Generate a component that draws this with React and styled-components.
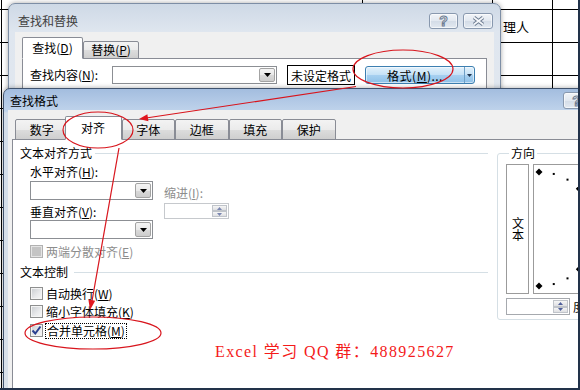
import styled, { createGlobalStyle } from "styled-components"

const GlobalStyle = createGlobalStyle`
  html, body {
    margin: 0;
    padding: 0;
  }
  body {
    width: 580px;
    height: 390px;
    overflow: hidden;
    background: #fff;
    font-family: "Noto Sans CJK SC", "Liberation Sans", sans-serif;
    font-size: 12px;
    color: #000;
  }
  * {
    box-sizing: border-box;
  }
`

const Desktop = styled.div`
  position: relative;
  width: 580px;
  height: 390px;
  overflow: hidden;
  border-right: 2px solid #22324a;
  border-bottom: 2px solid #22324a;
`

// spreadsheet behind the dialogs
const Sheet = styled.div`
  height: 100%;
  display: grid;
  grid-template-columns: 492px 61px 1fr;
  grid-template-rows: 10px 33px 1fr;
  background-color: #fff;
  background-image:
    linear-gradient(#000, #000),
    linear-gradient(#000, #000),
    linear-gradient(#000, #000),
    linear-gradient(#000, #000),
    linear-gradient(to bottom, transparent 32px, #000 32px);
  background-size: 1px 100%, 1px 100%, 1px 100%, 1px 100%, 100% 33px;
  background-position: 1px 0, 552px 0, 362px 0, 492px 0, 0 -23px;
  background-repeat: no-repeat, no-repeat, no-repeat, no-repeat, repeat;
`

const SheetCell = styled.div`
  grid-column: 2;
  grid-row: 2;
  align-self: center;
  padding-left: 11px;
  font-size: 13px;
`

const Window = styled.div`
  position: absolute;
  left: ${p => p.$x}px;
  top: ${p => p.$y}px;
  width: ${p => p.$w}px;
  height: ${p => p.$h}px;
  padding: 0 ${p => p.$frame}px;
  border: 1px solid ${p => (p.$active ? "#40536e" : "#7d8ea5")};
  border-radius: 7px 7px 0 0;
  background: ${p =>
    p.$active
      ? "linear-gradient(#a3bddf, #bfd3eb 22px, #d3dde9 24px, #d9e0e8)"
      : "linear-gradient(#ced9e6, #dfe6ef 28px, #e2e8ef)"};
  box-shadow: 0 0 5px rgba(0, 0, 0, 0.35);
  display: flex;
  flex-direction: column;
`

const TitleBar = styled.div`
  flex-shrink: 0;
  display: flex;
  align-items: center;
  height: ${p => p.$h}px;
  padding: ${p => p.$pad};
`

const Title = styled.span`
  flex: 1;
  font-size: 12px;
  line-height: 12px;
  color: ${p => (p.$active ? "#000" : "#404040")};
`

const CaptionButtons = styled.div`
  display: flex;
  gap: 5px;
`

const CaptionButton = styled.div`
  width: ${p => p.$w}px;
  height: ${p => p.$h}px;
  border: 1px solid #8898ae;
  border-radius: 3px;
  background: linear-gradient(#f1f4f8, #e2e8f0 50%, #d3dce7 51%, #e3e9f1);
  box-shadow: inset 0 0 0 1px rgba(255, 255, 255, 0.6);
  display: flex;
  align-items: center;
  justify-content: center;
  font-family: "Liberation Sans", sans-serif;
  font-weight: bold;
  font-size: 14px;
  color: #f6f8fb;
  -webkit-text-stroke: 1px #6d7c91;
`

const Client = styled.div`
  flex: 1;
  min-height: 0;
  display: flex;
  flex-direction: column;
  background: #f0f0f0;
  padding: ${p => p.$pad};
`

const TabStrip = styled.div`
  position: relative;
  z-index: 1;
  flex-shrink: 0;
  display: flex;
  align-items: flex-end;
  height: ${p => p.$h}px;
  padding-left: ${p => p.$indent}px;
  margin-bottom: -1px;
`

const Tab = styled.div`
  flex-shrink: 0;
  width: ${p => p.$w}px;
  height: ${p => p.$h}px;
  margin-left: ${p => p.$ml || 0}px;
  border: 1px solid #898c95;
  border-bottom-color: ${p => (p.$active ? "transparent" : "#898c95")};
  border-radius: 2px 2px 0 0;
  background: ${p =>
    p.$active
      ? "#fff"
      : "linear-gradient(#f3f3f3, #ebebeb 50%, #dddddd 51%, #cfcfcf)"};
  display: flex;
  align-items: center;
  justify-content: center;
  font-size: 12px;
  line-height: 12px;
  white-space: nowrap;
`

const TabPanel = styled.div`
  flex: 1;
  min-height: 0;
  display: flex;
  background: #fff;
  border: 1px solid #898c95;
  padding: ${p => p.$pad};
`

const Row = styled.div`
  display: flex;
  align-items: center;
  height: ${p => p.$h}px;
`

const Label = styled.span`
  flex-shrink: 0;
  width: ${p => (p.$w ? `${p.$w}px` : "auto")};
  margin-top: ${p => p.$mt || 0}px;
  font-size: 12px;
  line-height: 12px;
  color: ${p => (p.$disabled ? "#8d8d8d" : "#000")};
  white-space: nowrap;
  u {
    text-decoration: underline;
  }
`

const Combo = styled.div`
  flex-shrink: 0;
  display: flex;
  justify-content: flex-end;
  width: ${p => p.$w}px;
  height: ${p => p.$h}px;
  margin-top: ${p => p.$mt || 0}px;
  padding: 1px;
  background: #fff;
  border: 1px solid #8c8f94;
`

const DropButton = styled.div`
  width: 16px;
  display: flex;
  align-items: center;
  justify-content: center;
  border: 1px solid #a3a3a3;
  border-radius: 2px;
  background: linear-gradient(#f4f4f4, #e9e9e9 50%, #dadada 51%, #cdcdcd);
`

const FormatState = styled.div`
  margin-left: 10px;
  height: 20px;
  padding: 0 3px;
  display: flex;
  align-items: center;
  border: 1px solid #000;
  background: #fff;
  font-size: 12px;
`

const SplitButton = styled.div`
  margin-left: 10px;
  width: 110px;
  height: 18px;
  display: flex;
  border: 1px solid #3c7fb1;
  border-radius: 3px;
  background: linear-gradient(#e3f1fb, #c4e1f6 50%, #a7d0f0 51%, #8dc0e8);
  box-shadow: inset 0 0 0 1px rgba(255, 255, 255, 0.55);
`

const SplitMain = styled.div`
  flex: 1;
  display: flex;
  align-items: center;
  justify-content: center;
  font-size: 12px;
  letter-spacing: 0.5px;
`

const SplitArrow = styled.div`
  width: 10px;
  display: flex;
  align-items: center;
  justify-content: center;
  border-left: 1px solid #6e9fc6;
`

const LeftColumn = styled.div`
  flex-shrink: 0;
  width: 477px;
  padding-left: 7px;
  display: flex;
  flex-direction: column;
`

const SectionHead = styled.div`
  display: flex;
  align-items: center;
  height: 12px;
  margin-top: ${p => p.$mt}px;
  padding-right: 2px;
  font-size: 12px;
  line-height: 12px;

  &::after {
    content: "";
    flex: 1;
    margin-left: ${p => p.$gap}px;
    border-top: 1px solid #d5dfe5;
  }
`

const AlignBlock = styled.div`
  display: flex;
  gap: 11px;
  margin-top: 7px;
  padding-left: 10px;
`

const Stack = styled.div`
  display: flex;
  flex-direction: column;
  padding-top: ${p => p.$pt || 0}px;
`

const Spin = styled.div`
  flex-shrink: 0;
  display: flex;
  justify-content: flex-end;
  width: ${p => p.$w}px;
  height: ${p => p.$h}px;
  margin-top: ${p => p.$mt || 0}px;
  padding: 1px;
  background: #fff;
  border: 1px solid ${p => (p.$disabled ? "#c6c9cd" : "#a6a9ae")};
`

const SpinButtons = styled.div`
  width: 15px;
  display: flex;
  flex-direction: column;
`

const SpinButton = styled.div`
  flex: 1;
  display: flex;
  align-items: center;
  justify-content: center;
  border: 1px solid #c0c4ca;
  background: linear-gradient(#f6f6f6, #dedfe2);
`

const CheckList = styled.div`
  display: flex;
  flex-direction: column;
  gap: 5px;
  margin-top: ${p => p.$mt}px;
  padding-left: 10px;
`

const CheckRow = styled.div`
  display: flex;
  align-items: center;
  height: 13px;
  margin-top: ${p => p.$mt || 0}px;
  padding-left: ${p => p.$indent || 0}px;
`

const CheckBox = styled.span`
  flex-shrink: 0;
  width: 13px;
  height: 13px;
  display: flex;
  align-items: center;
  justify-content: center;
  border: 1px solid ${p => (p.$disabled ? "#b1b1b1" : "#8e8f8f")};
  background: ${p =>
    p.$disabled
      ? "#c4c4c4"
      : "linear-gradient(135deg, #c9ccd0, #e9eaec 60%, #f7f7f7)"};
  box-shadow: inset 0 0 0 1px ${p => (p.$disabled ? "#e4e4e4" : "#f4f4f4")};
`

const CheckLabel = styled.span`
  margin-left: ${p => (p.$focus ? 2 : 3)}px;
  padding: ${p => (p.$focus ? "1px" : "0")};
  border: ${p => (p.$focus ? "1px dotted #000" : "none")};
  font-size: 12px;
  line-height: 12px;
  white-space: nowrap;
  color: ${p => (p.$disabled ? "#8d8d8d" : "#000")};
`

const Watermark = styled.div`
  margin-top: 7px;
  padding-left: 195px;
  font-family: "Liberation Serif", "Noto Sans CJK SC", serif;
  font-size: 16px;
  line-height: 16px;
  letter-spacing: 1.4px;
  color: #f41a1a;
  white-space: nowrap;
`

const OrientGroup = styled.fieldset`
  flex-shrink: 0;
  width: 110px;
  height: 173px;
  margin: 7px 0 0 7px;
  padding: 5px 0 3px 8px;
  border: 1px solid #d5dfe5;
  border-radius: 3px;
`

const Legend = styled.legend`
  margin-left: 3px;
  padding: 0 2px;
  font-size: 12px;
  line-height: 12px;
`

const DialRow = styled.div`
  display: flex;
  gap: 4px;
`

const VerticalText = styled.div`
  width: 23px;
  height: 130px;
  display: flex;
  align-items: center;
  justify-content: center;
  border: 1px solid #9b9b9b;
  writing-mode: vertical-rl;
  text-orientation: upright;
  font-size: 12px;
  line-height: 12px;
`

const Dial = styled.div`
  width: 90px;
  height: 130px;
  border: 1px solid #9b9b9b;
`

const DegreeRow = styled.div`
  display: flex;
  align-items: center;
  gap: 3px;
  margin-top: 4px;
  font-size: 12px;
`

const Annotations = styled.svg`
  position: absolute;
  left: 0;
  top: 0;
  z-index: 10;
  pointer-events: none;
`

const Tri = ({ down = true, color = "#000", w = 7, h = 4 }) => (
  <svg width={w} height={h} viewBox={`0 0 ${w} ${h}`}>
    <polygon
      points={down ? `0,0 ${w},0 ${w / 2},${h}` : `0,${h} ${w},${h} ${w / 2},0`}
      fill={color}
    />
  </svg>
)

const CloseGlyph = () => (
  <svg width="13" height="10" viewBox="0 0 13 10">
    <path d="M2 1.5 L11 8.5 M11 1.5 L2 8.5" stroke="#6d7c91" strokeWidth="3.6" />
    <path d="M2 1.5 L11 8.5 M11 1.5 L2 8.5" stroke="#f6f8fb" strokeWidth="1.6" />
  </svg>
)

const CheckMark = () => (
  <svg width="11" height="11" viewBox="0 0 11 11">
    <path d="M1.5 5.5 L4.3 8.5 L9.5 1.5" fill="none" stroke="#2b4090" strokeWidth="2" />
  </svg>
)

const DialMarks = () => {
  const cx = 5
  const cy = 64
  const r = 57
  const marks = []
  for (let a = 90; a >= -90; a -= 15) {
    const rad = (a * Math.PI) / 180
    const x = cx + r * Math.cos(rad)
    const y = cy - r * Math.sin(rad)
    if (a % 45 === 0) {
      marks.push(
        <polygon
          key={a}
          points={`${x},${y - 3.5} ${x + 3.5},${y} ${x},${y + 3.5} ${x - 3.5},${y}`}
          fill="#000"
        />
      )
    } else {
      marks.push(<rect key={a} x={x - 1} y={y - 1} width="2" height="2" fill="#000" />)
    }
  }
  return (
    <svg width="88" height="128" viewBox="0 0 88 128">
      {marks}
    </svg>
  )
}

const formatTabs = ["数字", "对齐", "字体", "边框", "填充", "保护"]

const App = () => {
  return (
    <>
      <GlobalStyle />
      <Desktop>
        <Sheet>
          <SheetCell>理人</SheetCell>
        </Sheet>

        <Window $x={8} $y={3} $w={493} $h={140} $frame={6}>
          <TitleBar $h={28} $pad="6px 1px 0 3px">
            <Title>查找和替换</Title>
            <CaptionButtons>
              <CaptionButton $w={29} $h={16}>?</CaptionButton>
              <CaptionButton $w={30} $h={16}>
                <CloseGlyph />
              </CaptionButton>
            </CaptionButtons>
          </TitleBar>
          <Client $pad="5px 7px 0 7px">
            <TabStrip $h={22} $indent={0}>
              <Tab $active $w={61} $h={22}>
                查找(<u>D</u>)
              </Tab>
              <Tab $w={56} $h={18}>
                替换(<u>P</u>)
              </Tab>
            </TabStrip>
            <TabPanel $pad="6px 0 0 7px">
              <Row $h={20}>
                <Label $w={82}>
                  查找内容(<u>N</u>):
                </Label>
                <Combo $w={165} $h={18}>
                  <DropButton>
                    <Tri />
                  </DropButton>
                </Combo>
                <FormatState>未设定格式</FormatState>
                <SplitButton>
                  <SplitMain>
                    格式(<u>M</u>)...
                  </SplitMain>
                  <SplitArrow>
                    <Tri w={5} h={3} color="#1f3550" />
                  </SplitArrow>
                </SplitButton>
              </Row>
            </TabPanel>
          </Client>
        </Window>

        <Window $active $x={3} $y={88} $w={641} $h={320} $frame={4}>
          <TitleBar $h={21} $pad="2px 1px 0 2px">
            <Title $active>查找格式</Title>
            <CaptionButtons>
              <CaptionButton $w={27} $h={17}>?</CaptionButton>
              <CaptionButton $w={43} $h={17}>
                <CloseGlyph />
              </CaptionButton>
            </CaptionButtons>
          </TitleBar>
          <Client $pad="6px 0 0 4px">
            <TabStrip $h={24} $indent={3}>
              {formatTabs.map(t =>
                t === "对齐" ? (
                  <Tab key={t} $active $w={57} $h={24} $ml={-4}>
                    {t}
                  </Tab>
                ) : (
                  <Tab key={t} $w={53.5} $h={21}>
                    {t}
                  </Tab>
                )
              )}
            </TabStrip>
            <TabPanel $pad="0">
              <LeftColumn>
                <SectionHead $mt={7} $gap={3}>
                  文本对齐方式
                </SectionHead>
                <AlignBlock>
                  <Stack>
                    <Label>
                      水平对齐(<u>H</u>):
                    </Label>
                    <Combo $w={123} $h={19} $mt={3}>
                      <DropButton>
                        <Tri />
                      </DropButton>
                    </Combo>
                    <Label $mt={6}>
                      垂直对齐(<u>V</u>):
                    </Label>
                    <Combo $w={123} $h={19} $mt={2}>
                      <DropButton>
                        <Tri />
                      </DropButton>
                    </Combo>
                  </Stack>
                  <Stack $pt={21}>
                    <Label $disabled>
                      缩进(<u>I</u>):
                    </Label>
                    <Spin $disabled $w={65} $h={16} $mt={4}>
                      <SpinButtons>
                        <SpinButton>
                          <Tri down={false} w={5} h={3} color="#7a86b0" />
                        </SpinButton>
                        <SpinButton>
                          <Tri w={5} h={3} color="#7a86b0" />
                        </SpinButton>
                      </SpinButtons>
                    </Spin>
                  </Stack>
                </AlignBlock>
                <CheckRow $mt={6} $indent={10}>
                  <CheckBox $disabled />
                  <CheckLabel $disabled>
                    两端分散对齐(<u>E</u>)
                  </CheckLabel>
                </CheckRow>
                <SectionHead $mt={8} $gap={6}>
                  文本控制
                </SectionHead>
                <CheckList $mt={9}>
                  <CheckRow>
                    <CheckBox />
                    <CheckLabel>
                      自动换行(<u>W</u>)
                    </CheckLabel>
                  </CheckRow>
                  <CheckRow>
                    <CheckBox />
                    <CheckLabel>
                      缩小字体填充(<u>K</u>)
                    </CheckLabel>
                  </CheckRow>
                  <CheckRow $mt={1}>
                    <CheckBox>
                      <CheckMark />
                    </CheckBox>
                    <CheckLabel $focus>
                      合并单元格(<u>M</u>)
                    </CheckLabel>
                  </CheckRow>
                </CheckList>
                <Watermark>Excel 学习 QQ 群：488925627</Watermark>
              </LeftColumn>

              <OrientGroup>
                <Legend>方向</Legend>
                <DialRow>
                  <VerticalText>文本</VerticalText>
                  <Dial>
                    <DialMarks />
                  </Dial>
                </DialRow>
                <DegreeRow>
                  <Spin $w={64} $h={17}>
                    <SpinButtons>
                      <SpinButton>
                        <Tri down={false} w={5} h={3} color="#4f5f9a" />
                      </SpinButton>
                      <SpinButton>
                        <Tri w={5} h={3} color="#4f5f9a" />
                      </SpinButton>
                    </SpinButtons>
                  </Spin>
                  度
                </DegreeRow>
              </OrientGroup>
            </TabPanel>
          </Client>
        </Window>

        <Annotations width="580" height="390" viewBox="0 0 580 390">
          <g fill="none" stroke="#d8141c" strokeWidth="1.2">
            <ellipse cx="403" cy="69" rx="50" ry="19" />
            <ellipse cx="98" cy="130" rx="35" ry="18" />
            <ellipse cx="93" cy="333" rx="68" ry="16" />
            <line x1="356" y1="86.5" x2="146" y2="118" />
            <line x1="119" y1="148" x2="92" y2="301" />
          </g>
          <g fill="#e01820">
            <polygon points="139,119 148.4,121.2 147.4,114.2" />
            <polygon points="90,310 95.2,300.8 88.4,299.6" />
          </g>
        </Annotations>
      </Desktop>
    </>
  )
}

export default App
